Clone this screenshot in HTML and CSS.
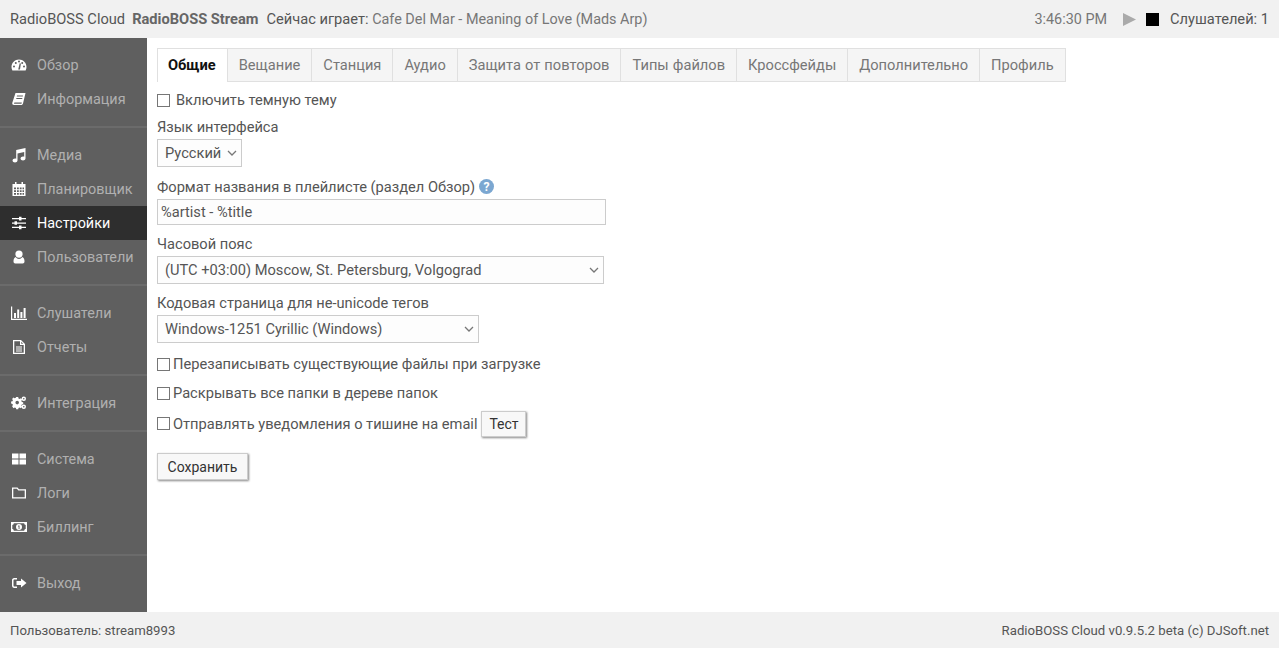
FILE: index.html
```html
<!DOCTYPE html>
<html lang="ru">
<head>
<meta charset="utf-8">
<title>RadioBOSS Cloud</title>
<link rel="stylesheet" href="styles.css">
</head>
<body>
<header class="topbar">
  <div class="now">
    <span>RadioBOSS Cloud</span>
    <b class="stream">RadioBOSS Stream</b>
    <span class="playing"><span class="playing-label">Сейчас играет:</span> <span class="track">Cafe Del Mar - Meaning of Love (Mads Arp)</span></span>
  </div>
  <div class="status">
    <span class="clock">3:46:30 PM</span>
    <svg class="play" viewBox="0 0 13 13"><path d="M0 0L13 6.5L0 13Z"/></svg>
    <span class="stop"></span>
    <span class="listeners">Слушателей: 1</span>
  </div>
</header>
<div class="middle">
  <nav class="sidebar">
    <div class="group">
      <a class="item"><svg class="ico" viewBox="0 0 16 16"><path fill-rule="evenodd" d="M8 2.500C3.800 2.500.5 5.900.5 10c0 1.300.3 2.400.9 3.500h13.200c.6-1.100.9-2.200.9-3.500 0-4.100-3.300-7.500-7.500-7.500zM3 10.500a1 1 0 1 0 0-2 1 1 0 0 0 0 2zM4.800 7a1 1 0 1 0 0-2 1 1 0 0 0 0 2zM8 5.500a1 1 0 1 0 0-2 1 1 0 0 0 0 2zM13 10.500a1 1 0 1 0 0-2 1 1 0 0 0 0 2zM11.200 7a1 1 0 1 0 0-2 1 1 0 0 0 0 2zM7.200 12.500h1.800l.9-6-1.200-.2z"/></svg><span>Обзор</span></a>
      <a class="item"><svg class="ico" viewBox="0 0 16 16"><path fill-rule="evenodd" d="M4.500 2H14.500L12 12.500c-.2.800-.8 1.500-2 1.500H3c-1.200 0-2-1-1.700-2.300zM6 4.500l-.2 1h6l.2-1zM5.400 7l-.2 1h6l.2-1zM3.700 11.500c-.4 0-.7.300-.7.700s.3.600.7.600h6.800l.3-1.300z"/></svg><span>Информация</span></a>
    </div>
    <div class="group">
      <a class="item"><svg class="ico" viewBox="0 0 16 16"><path d="M14.500 1v10.500c0 1.300-1.300 2-2.500 2s-2.500-.7-2.500-2 1.300-2 2.500-2c.5 0 .9.100 1.200.2V5L6.500 6.500V13.500C6.500 14.800 5.200 15.500 4 15.500s-2.500-.7-2.500-2 1.300-2 2.500-2c.5 0 .9.100 1.200.2V3z"/></svg><span>Медиа</span></a>
      <a class="item"><svg class="ico" viewBox="0 0 16 16"><path fill-rule="evenodd" d="M1.500 3H4V1h1.500v2h5V1H12v2h2.500v12H1.500zM3 6.500V8.300h2V6.500zM6 6.500V8.300h1.800V6.500zM8.800 6.500V8.300H10.600V6.500zM11.500 6.500V8.300H13V6.500zM3 9.200V11h2V9.200zM6 9.200V11h1.800V9.200zM8.800 9.200V11H10.600V9.200zM11.500 9.200V11H13V9.200zM3 12V13.700h2V12zM6 12V13.700h1.800V12zM8.800 12V13.700H10.600V12zM11.500 12V13.700H13V12z"/></svg><span>Планировщик</span></a>
      <a class="item active"><svg class="ico" viewBox="0 0 16 16"><path d="M1 3h7V1.800h2.500V3H15v1.300h-4.500v1.200H8V4.300H1zM1 7.400h2.500V6.200H6v1.200h9v1.300H6v1.100H3.500V8.700H1zM1 11.800h7v-1.200h2.500v1.200H15v1.300h-4.500v1.200H8v-1.200H1z"/></svg><span>Настройки</span></a>
      <a class="item"><svg class="ico" viewBox="0 0 16 16"><path d="M8 1.500a3.300 3.300 0 1 1 0 7.200 3.300 3.300 0 0 1 0-7.200zM4.700 8C5.500 9.300 6.600 10 8 10s2.500-.7 3.300-2C13 8.500 13.500 10.500 13.500 12.500c0 1.300-.7 2-1.800 2H4.300C3.200 14.500 2.500 13.800 2.500 12.500 2.500 10.500 3 8.500 4.700 8z"/></svg><span>Пользователи</span></a>
    </div>
    <div class="group">
      <a class="item"><svg class="ico" viewBox="0 0 16 16"><path d="M0 1.500h1.200V13.800H16V15H0zM3 8h2v5H3zM6.200 4.500h2V13h-2zM9.400 7h2v6h-2zM12.600 3h2v10h-2z"/></svg><span>Слушатели</span></a>
      <a class="item"><svg class="ico" viewBox="0 0 16 16"><path fill-rule="evenodd" d="M2 1h8l4 4v10H2zM3.300 2.300V13.700H12.700V6H9V2.300zM10.200 2.800V4.800H12.200zM5 7.500h6v1H5zM5 9.500h6v1H5zM5 11.500h6v1H5z"/></svg><span>Отчеты</span></a>
    </div>
    <div class="group">
      <a class="item"><svg class="ico" viewBox="0 0 16 16"><path fill-rule="evenodd" d="M4.200 3.500h2l.3 1.400 1.100.5 1.300-.7 1.300 1.400-.8 1.200.4 1.100 1.400.3v2l-1.400.3-.4 1.100.8 1.200-1.300 1.400-1.300-.8-1.100.5-.3 1.400h-2l-.3-1.400-1.100-.5-1.300.8L.1 12.700l.8-1.200-.4-1.100L-.9 10.100V8.100l1.400-.3.4-1.100-.8-1.200 1.300-1.400 1.300.7 1.100-.5zM5.200 7.300a1.800 1.800 0 1 0 0 3.600 1.800 1.800 0 0 0 0-3.600z" transform="translate(1 -1.500)"/><path fill-rule="evenodd" d="M12.800 1.500a2.200 2.200 0 1 1 0 4.400 2.200 2.200 0 0 1 0-4.400zM12.800 2.900a.8.800 0 1 0 0 1.600.8.800 0 0 0 0-1.600zM12.800 9.500a2.200 2.200 0 1 1 0 4.400 2.200 2.200 0 0 1 0-4.400zM12.800 10.900a.8.800 0 1 0 0 1.600.8.800 0 0 0 0-1.600z"/></svg><span>Интеграция</span></a>
    </div>
    <div class="group">
      <a class="item"><svg class="ico" viewBox="0 0 16 16"><path d="M1 2.500h6.500V7.500H1zM8.500 2.500H15V7.500H8.500zM1 8.500h6.500V13.500H1zM8.500 8.500H15V13.500H8.500z"/></svg><span>Система</span></a>
      <a class="item"><svg class="ico" viewBox="0 0 16 16"><path fill-rule="evenodd" d="M1 2.500H6.500L8 4.200H15V13.500H1zM2.300 3.800V12.200H13.700V5.500H7.400L5.900 3.800z"/></svg><span>Логи</span></a>
      <a class="item"><svg class="ico" viewBox="0 0 16 16"><path fill-rule="evenodd" d="M0 3H16V13H0zM2.800 4.300C2.800 5.200 2.100 5.900 1.300 5.900V10.100C2.100 10.100 2.800 10.800 2.800 11.700H13.200C13.200 10.800 13.900 10.100 14.700 10.100V5.900C13.900 5.900 13.200 5.200 13.200 4.300zM8 5a3 3 0 1 1 0 6 3 3 0 0 1 0-6zM7 6.800v.8h.6V10h.9V6.500H7.600z"/></svg><span>Биллинг</span></a>
    </div>
    <div class="group">
      <a class="item"><svg class="ico" viewBox="0 0 16 16"><path d="M6 3v1.500H3.500C2.900 4.500 2.500 5 2.500 5.500v5c0 .5.400 1 1 1H6V13H3.200C1.900 13 1 12 1 10.800V5.200C1 4 1.900 3 3.200 3zM10 3.500L15.500 8 10 12.500V10H5.500V6H10z"/></svg><span>Выход</span></a>
    </div>
  </nav>
  <main class="content">
    <ul class="tabs">
      <li class="tab selected">Общие</li>
      <li class="tab">Вещание</li>
      <li class="tab">Станция</li>
      <li class="tab">Аудио</li>
      <li class="tab">Защита от повторов</li>
      <li class="tab">Типы файлов</li>
      <li class="tab">Кроссфейды</li>
      <li class="tab">Дополнительно</li>
      <li class="tab">Профиль</li>
    </ul>
    <label class="dark-row"><input type="checkbox" class="check"><span>Включить темную тему</span></label>
    <label class="field-label">Язык интерфейса</label>
    <select class="select lang"><option>Русский</option></select>
    <label class="field-label format-label">Формат названия в плейлисте (раздел Обзор)
      <svg class="help" viewBox="0 0 16 16"><circle cx="8" cy="8" r="8" fill="#7ba7d1"/><text x="8" y="12.700" text-anchor="middle" class="help-mark">?</text></svg>
    </label>
    <input class="text-input" type="text" value="%artist - %title">
    <label class="field-label tz-label">Часовой пояс</label>
    <select class="select tz"><option>(UTC +03:00) Moscow, St. Petersburg, Volgograd</option></select>
    <label class="field-label cp-label">Кодовая страница для не-unicode тегов</label>
    <select class="select cp"><option>Windows-1251 Cyrillic (Windows)</option></select>
    <label class="check-row first"><input type="checkbox" class="check"><span>Перезаписывать существующие файлы при загрузке</span></label>
    <label class="check-row"><input type="checkbox" class="check"><span>Раскрывать все папки в дереве папок</span></label>
    <div class="check-row email"><input type="checkbox" class="check"><span>Отправлять уведомления о тишине на email</span><button class="btn test">Тест</button></div>
    <button class="btn save">Сохранить</button>
  </main>
</div>
<footer class="footer">
  <span>Пользователь: stream8993</span>
  <span>RadioBOSS Cloud v0.9.5.2 beta (c) DJSoft.net</span>
</footer>
</body>
</html>
```
FILE: styles.css
```css
* { box-sizing: border-box; }
html, body { height: 100%; }
body {
  margin: 0;
  display: flex;
  flex-direction: column;
  height: 648px;
  overflow: hidden;
  font-family: Roboto, "Liberation Sans", sans-serif;
  font-size: 14.65px;
  color: #555;
  background: #fff;
}
.topbar {
  height: 38px;
  flex: none;
  background: #f1f1f1;
  display: flex;
  align-items: center;
  justify-content: space-between;
  padding: 0 10px;
  color: #555;
}
.now { display: flex; }
.stream { margin-left: 7px; font-weight: 700; color: #666; }
.playing { margin-left: 8px; color: #555; }
.playing-label { color: #555; }
.track { color: #777; font-size: 14.4px; }
.status { display: flex; align-items: center; }
.clock { color: #777; font-size: 14.4px; }
.play { width: 13px; height: 13px; margin-left: 16px; fill: #aaa; }
.stop { width: 13px; height: 13px; margin-left: 10px; background: #000; }
.listeners { margin-left: 11px; }
.middle { flex: 1; display: flex; min-height: 0; }
.sidebar {
  width: 147px;
  flex: none;
  background: #5f5f5f;
  padding-top: 10px;
}
.group { padding-bottom: 10px; margin-bottom: 10px; border-bottom: 2px solid #6b6b6b; }
.group:last-child { border-bottom: 0; margin-bottom: 0; }
.item {
  display: flex;
  align-items: center;
  height: 34px;
  padding-left: 11px;
  color: #b0b0b0;
  font-size: 14.4px;
}
.item.active { background: #2e2e2e; color: #fff; }
.ico { width: 16px; height: 16px; fill: #fff; flex: none; margin-right: 10px; }
.content { flex: 1; padding: 10px 10px 0; min-width: 0; }
.tabs {
  display: flex;
  list-style: none;
  margin: 0;
  padding: 0;
  height: 34px;
}
.tab {
  padding: 0 11px;
  line-height: 32px;
  background: #f5f5f5;
  border: 1px solid #e0e0e0;
  border-left: 0;
  color: #777;
  word-spacing: 0.5px;
}
.tab.selected {
  background: #fff;
  color: #111;
  font-weight: 700;
  padding: 0 11px 0 10px;
  border-bottom: 0;
  border-left: 1px solid #e0e0e0;
}
.check {
  appearance: none;
  width: 13px;
  height: 13px;
  margin: 0;
  flex: none;
  background: #fff;
  border: 1px solid #767676;
}
.dark-row { display: flex; align-items: center; gap: 6px; height: 20px; margin-top: 8px; }
.field-label { display: block; line-height: 20px; }
.dark-row + .field-label { margin-top: 7px; }
.select {
  appearance: none;
  display: block;
  height: 28px;
  font-family: inherit;
  font-size: 14.65px;
  color: #555;
  background: #fdfdfd url("data:image/svg+xml,%3Csvg xmlns='http://www.w3.org/2000/svg' width='10' height='6'%3E%3Cpath d='M1 1l4 4 4-4' fill='none' stroke='%23777' stroke-width='1.300'/%3E%3C/svg%3E") no-repeat right 4px center;
  border: 1px solid #ccc;
  padding: 0 7px;
  margin-top: 2px;
}
.lang { width: 85px; }
.format-label { margin-top: 10px; }
.help { width: 15px; height: 15px; vertical-align: -2px; }
.help-mark { font-size: 13px; font-weight: 700; fill: #fff; font-family: Roboto, sans-serif; }
.text-input {
  display: block;
  width: 449px;
  height: 26px;
  margin-top: 2px;
  padding: 0 3px;
  font-family: inherit;
  font-size: 14.65px;
  color: #555;
  background: #fdfdfd;
  border: 1px solid #ccc;
}
.tz-label { margin-top: 9px; }
.tz { width: 447px; }
.cp-label { margin-top: 9px; }
.cp { width: 322px; }
.check-row { display: flex; align-items: center; gap: 3px; height: 20px; margin-top: 9px; }
.check-row.first { margin-top: 11px; }
.check-row.email { height: 27px; margin-top: 7px; }
.btn {
  font-family: inherit;
  font-size: 14px;
  color: #333;
  background: #f8f8f8;
  border: 1px solid #ccc;
  box-shadow: 1px 1px 2px #888;
}
.test { height: 26px; width: 45px; padding: 0; margin-left: 1px; }
.save { display: block; height: 27px; width: 91px; padding: 0; margin-top: 16px; }
.footer {
  height: 36px;
  flex: none;
  background: #f1f1f1;
  display: flex;
  align-items: center;
  justify-content: space-between;
  padding: 0 10px;
  font-size: 13.2px;
}
```
